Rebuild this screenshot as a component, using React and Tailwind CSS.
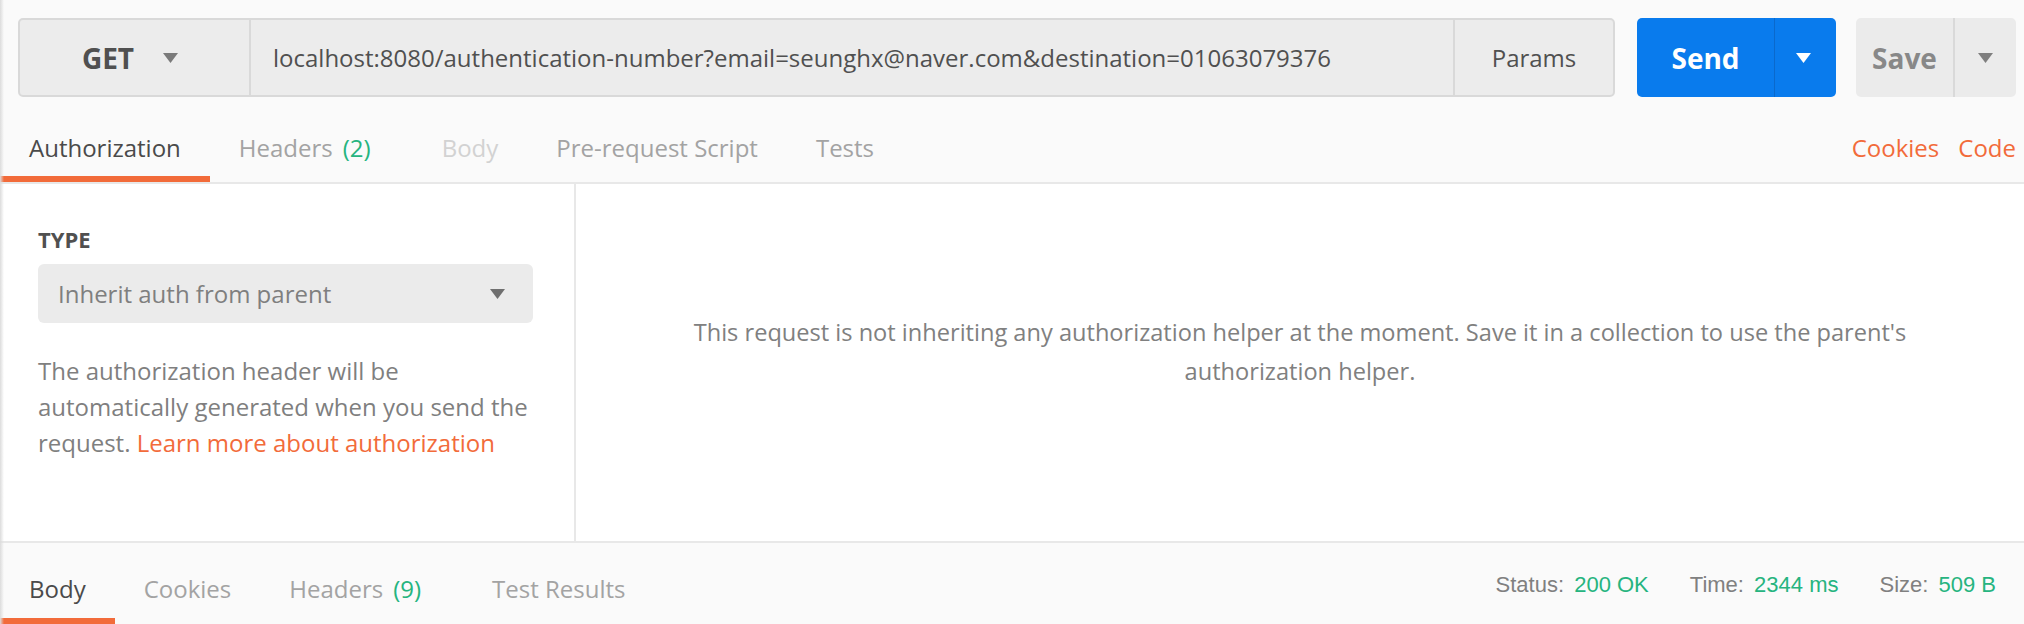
import React from "react";

const font = { fontFamily: '"Open Sans", "Liberation Sans", sans-serif' };

function Caret({ color = "#7a7a7a", className = "" }) {
    return (
        <svg width="15" height="10" viewBox="0 0 15 10" className={className}>
            <polygon points="0,0 15,0 7.5,10" fill={color} />
        </svg>
    );
}

function Tab({ label, count, active, disabled, bottom }) {
    const color = active ? "text-[#4a4a4a]" : disabled ? "text-[#d2d2d2]" : "text-[#a3a3a3]";
    return (
        <div className={`relative flex px-[29px] ${bottom ? "pt-[28px]" : "items-center"} ${color}`}>
            <span className="text-[24px] leading-[36px] whitespace-nowrap">
                {label}
                {count && <span className="ml-[10px] mr-[13px] text-[#26b47f]">({count})</span>}
            </span>
            {active && <span className="absolute bottom-0 left-0 right-0 h-[6px] bg-[#f26b3a]" />}
        </div>
    );
}

function App() {
    return (
        <div style={font} className="relative flex h-[624px] w-[2024px] flex-col overflow-hidden bg-white">
            {/* request bar + tabs */}
            <div className="flex flex-col bg-[#fafafa] border-b-2 border-[#e8e8e8]">
                <div className="mt-[18px] flex h-[79px] pl-[18px]">
                    <div className="flex w-[1597px] rounded-[5px] border-2 border-[#d9d9d9] bg-[#ececec]">
                        <div className="flex w-[231px] items-center justify-center gap-[29px] border-r-2 border-[#d9d9d9] pr-[9px]">
                            <span className="text-[28px] font-bold text-[#505050]">GET</span>
                            <Caret />
                        </div>
                        <div className="flex flex-1 items-center pl-[22px] text-[24px] text-[#505050] whitespace-nowrap">
                            localhost:8080/authentication-number?email=seunghx@naver.com&amp;destination=01063079376
                        </div>
                        <div className="flex w-[160px] items-center justify-center border-l-2 border-[#d9d9d9] text-[24px] text-[#505050]">
                            Params
                        </div>
                    </div>
                    <div className="ml-[22px] flex w-[199px] rounded-[5px] bg-[#097bed]">
                        <div className="flex w-[137px] items-center justify-center text-[28px] font-bold text-white">
                            Send
                        </div>
                        <div className="flex flex-1 items-center justify-center border-l border-[#0a69cc]">
                            <Caret color="#ffffff" className="mr-[4px]" />
                        </div>
                    </div>
                    <div className="ml-[20px] flex w-[160px] rounded-[5px] bg-[#ebebeb]">
                        <div className="flex w-[99px] items-center justify-center border-r-2 border-[#d9d9d9] text-[28px] font-bold text-[#888888]">
                            Save
                        </div>
                        <div className="flex flex-1 items-center justify-center">
                            <Caret color="#7f7f7f" />
                        </div>
                    </div>
                </div>
                <div className="mt-[16px] flex h-[69px]">
                    <Tab label="Authorization" active />
                    <Tab label="Headers" count="2" />
                    <Tab label="Body" disabled />
                    <Tab label="Pre-request Script" />
                    <Tab label="Tests" />
                    <div className="ml-auto flex items-center gap-[19px] pr-[8px] text-[24px] text-[#f26b3a]">
                        <span>Cookies</span>
                        <span>Code</span>
                    </div>
                </div>
            </div>

            {/* auth body */}
            <div className="flex h-[357px]">
                <div className="w-[576px] border-r-2 border-[#e8e8e8] pl-[38px] pt-[40px]">
                    <p className="text-[22px] font-bold leading-[30px] text-[#505050]">TYPE</p>
                    <div className="mt-[10px] flex h-[59px] w-[495px] items-center justify-between rounded-[6px] bg-[#ebebeb] pl-[20px] pr-[28px]">
                        <span className="text-[24px] text-[#7f7f7f]">Inherit auth from parent</span>
                        <Caret color="#6f6f6f" />
                    </div>
                    <p className="mt-[30px] w-[500px] text-[24px] leading-[36px] text-[#7f7f7f]">
                        The authorization header will be<br />
                        automatically generated when you send the<br />
                        request. <span className="text-[#f26b3a]">Learn more about authorization</span>
                    </p>
                </div>
                <div className="flex flex-1 justify-center pt-[129px]">
                    <p className="text-center text-[23.6px] leading-[39px] text-[#808080] whitespace-nowrap">
                        This request is not inheriting any authorization helper at the moment. Save it in a collection to use the parent's
                        <br />
                        authorization helper.
                    </p>
                </div>
            </div>

            {/* response bar */}
            <div className="flex h-[83px] border-t-2 border-[#e8e8e8] bg-[#fafafa]">
                <Tab label="Body" active bottom />
                <Tab label="Cookies" bottom />
                <Tab label="Headers" count="9" bottom />
                <Tab label="Test Results" bottom />
                <div
                    className="ml-auto flex items-start gap-[41px] pr-[28px] pt-[27px] text-[22px] leading-[30px]"
                    style={{ fontFamily: '"Liberation Sans", Arial, sans-serif' }}
                >
                    <span className="text-[#808080]">
                        Status: <span className="ml-[4px] text-[#26b47f]">200 OK</span>
                    </span>
                    <span className="text-[#808080]">
                        Time: <span className="ml-[4px] text-[#26b47f]">2344 ms</span>
                    </span>
                    <span className="text-[#808080]">
                        Size: <span className="ml-[4px] text-[#26b47f]">509 B</span>
                    </span>
                </div>
            </div>

            <div className="pointer-events-none absolute inset-y-0 left-0 w-[4px] bg-gradient-to-r from-[#dcdcdc] to-transparent" />
        </div>
    );
}

export default App;
